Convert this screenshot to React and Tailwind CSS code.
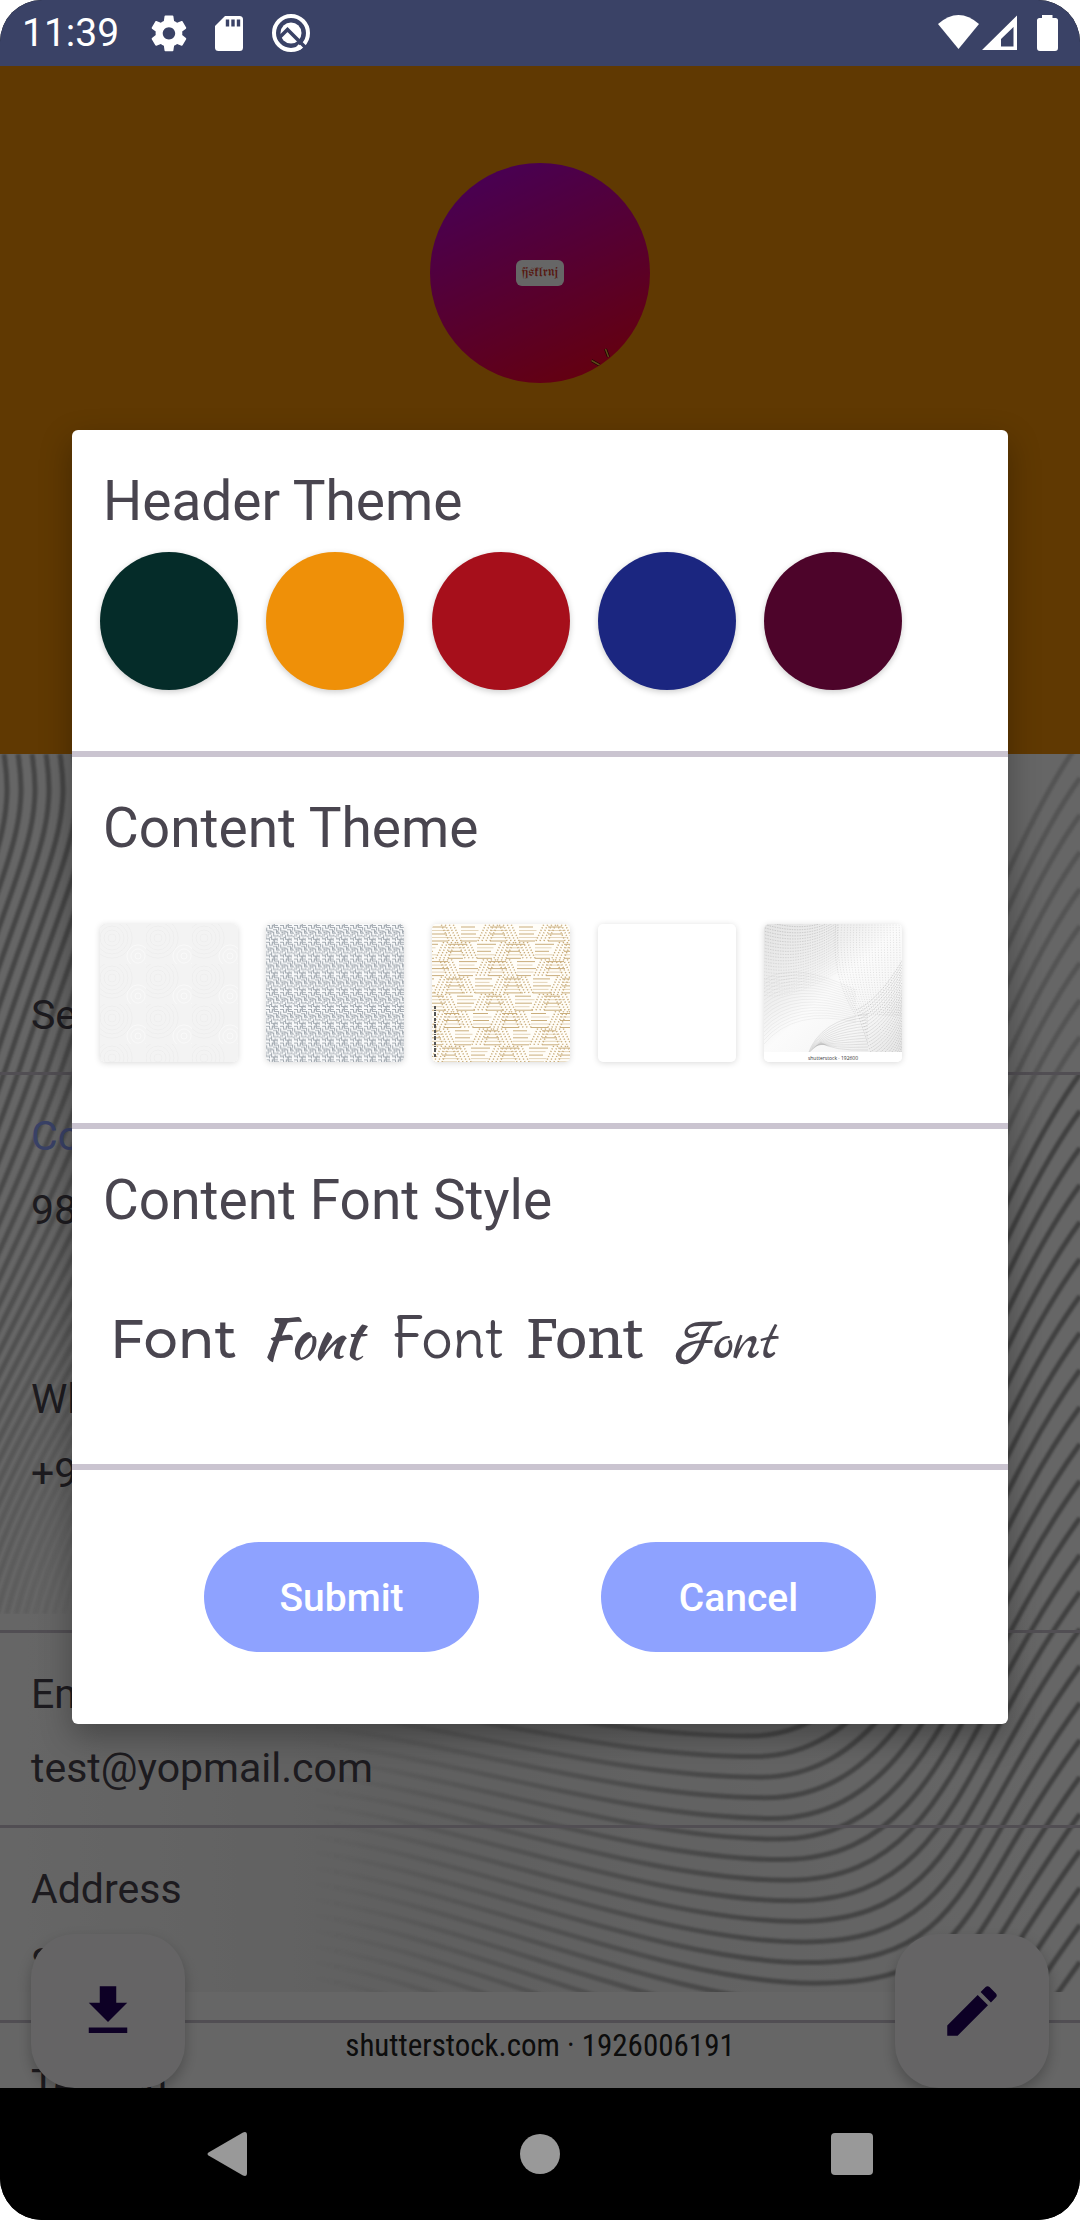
import React from "react";

const range = (from, to) => Array.from({ length: to - from + 1 }, (_, i) => from + i);

/* ---------- status bar ---------- */

function StatusBar() {
  return (
    <header className="flex h-[66px] shrink-0 items-center justify-between bg-[#3a4266] px-[22px] text-white">
      <div className="flex items-center gap-7">
        <time className="mr-1 text-[39px] leading-[48px]">11:39</time>
        <svg className="h-10 w-9" viewBox="0 0 36 40" fill="#fff" aria-label="Settings">
          <g transform="translate(-3.4 -1) scale(1.78)">
            <path d="M19.43 12.98c.04-.32.07-.64.07-.98s-.03-.66-.07-.98l2.11-1.65c.19-.15.24-.42.12-.64l-2-3.46c-.12-.22-.39-.3-.61-.22l-2.49 1c-.52-.4-1.08-.73-1.69-.98l-.38-2.65C14.46 2.18 14.25 2 14 2h-4c-.25 0-.46.18-.49.42l-.38 2.65c-.61.25-1.17.59-1.69.98l-2.49-1c-.23-.09-.49 0-.61.22l-2 3.46c-.13.22-.07.49.12.64l2.11 1.65c-.04.32-.07.65-.07.98s.03.66.07.98l-2.11 1.65c-.19.15-.24.42-.12.64l2 3.46c.12.22.39.3.61.22l2.49-1c.52.4 1.08.73 1.69.98l.38 2.65c.03.24.24.42.49.42h4c.25 0 .46-.18.49-.42l.38-2.65c.61-.25 1.17-.59 1.69-.98l2.49 1c.23.09.49 0 .61-.22l2-3.46c.12-.22.07-.49-.12-.64l-2.11-1.65zM12 15.5c-1.93 0-3.5-1.57-3.5-3.5s1.57-3.5 3.5-3.5 3.5 1.57 3.5 3.5-1.57 3.5-3.5 3.5z" />
          </g>
        </svg>
        <svg className="h-10 w-[28px]" viewBox="0 0 28 40" aria-label="SD card">
          <path fill="#fff" d="M10 3h14.500q3.500 0 3.500 3.500v28q0 3.500-3.500 3.500h-21q-3.500 0-3.500-3.500V13z" />
          <path stroke="#3a4266" strokeWidth="3.400" d="M12.500 6.500v7M18 6.500v7M23.500 6.500v7" />
        </svg>
        <svg className="h-10 w-10" viewBox="0 0 40 40" fill="none" aria-label="Device assistant">
          <circle cx="20" cy="20" r="17" stroke="#fff" strokeWidth="4" />
          <circle cx="20" cy="20" r="10.500" fill="#fff" />
          <path stroke="#3a4266" strokeWidth="3.600" d="M8 25l8.500-8.500L34 34" />
          <path stroke="#fff" strokeWidth="3.600" d="M26.500 32.500l3.500 3.500" />
        </svg>
      </div>
      <svg className="h-10 w-[121px]" viewBox="937 13 121 40" fill="#fff" aria-label="Wi-Fi, signal and battery">
        <path d="M958.500 49L938 24q20.500-18 41 0z" />
        <path fillRule="evenodd" d="M1017 15.500V50H982zM1013.500 27l-12.500 12v7.500h12.500z" />
        <path d="M1042 18v-3h10.500v3h3q2.500 0 2.500 2.500V48q0 3-3 3h-15q-3 0-3-3V20.500q0-2.500 2.500-2.500z" />
      </svg>
    </header>
  );
}

/* ---------- profile page ---------- */

function ProfilePicture() {
  return (
    <div className="relative mx-auto flex size-[220px] items-center justify-center overflow-hidden rounded-full bg-[linear-gradient(155deg,#b400d0_10%,#fa0028_90%)]">
      <span className="rounded-md bg-white px-[6px] font-['UnifrakturMaguntia','Liberation_Serif',serif] text-sm leading-[26px] text-[#d8402c]">
        fjsklrnj
      </span>
      <svg className="absolute inset-0 size-full" viewBox="0 0 220 220" fill="none">
        <path stroke="#3a1000" strokeWidth="3" d="M161.500 197.500l8 4.500M175.500 186l3 8" />
        <path stroke="#f0b040" strokeWidth="1.500" d="M161.500 197.500l8 4.500M175.500 186l3 8" />
      </svg>
    </div>
  );
}

const valleyLines = range(-15, 34).map((k) => {
  const x = 750 + 5.4 * k;
  const y = 1736 + 20.6 * k;
  const right = 1740 - 37 * (12 - k);
  return {
    light: right < 1060,
    d: `M270 ${y - 60 - 5 * k}C430 ${y - 50 - 5 * k} ${x - 160} ${y} ${x} ${y}S960 ${right + 165} 1080 ${right}`,
  };
});

const leftLines = range(-3, 36).map((j) => ({
  d: `M${4 + 14 * j} 754C${16 + 14 * j} 830 ${-8 + 14 * j} 860 ${-72 + 14 * j} 1050C${-136 + 14 * j} 1240 ${-200 + 9.5 * j} 1420 ${-250 + 9.5 * j} 1614`,
  o: Math.max(0.03, 0.4 - Math.max(0, j - 6) * 0.0135),
}));

function WaveBackdrop() {
  return (
    <div className="absolute inset-0 bg-white" aria-hidden="true">
      <svg className="size-full" viewBox="0 754 1080 1334" preserveAspectRatio="none" fill="none">
        <defs>
          <linearGradient id="fade" gradientUnits="userSpaceOnUse" x1="270" x2="1080" y1="0" y2="0">
            <stop offset="0.050" stopColor="#555" stopOpacity="0" />
            <stop offset="0.300" stopColor="#555" stopOpacity="0.220" />
            <stop offset="0.600" stopColor="#4a4a4a" stopOpacity="0.420" />
            <stop offset="1" stopColor="#444" stopOpacity="0.500" />
          </linearGradient>
          <linearGradient id="tone" x1="0" x2="1" y1="0" y2="0">
            <stop offset="0" stopColor="#999" stopOpacity="0" />
            <stop offset="0.400" stopColor="#999" stopOpacity="0.160" />
            <stop offset="1" stopColor="#999" stopOpacity="0" />
          </linearGradient>
          <filter id="soft">
            <feGaussianBlur stdDeviation="1.200" />
          </filter>
          <clipPath id="art">
            <rect x="0" y="754" width="1080" height="1238" />
          </clipPath>
          <clipPath id="leftSide">
            <rect x="0" y="754" width="160" height="860" />
          </clipPath>
        </defs>
        <rect x="0" y="1600" width="1080" height="392" fill="url(#tone)" />
        <g clipPath="url(#art)">
          <g stroke="url(#fade)" strokeWidth="5" filter="url(#soft)">
            {valleyLines.map((l) => (
              <path key={l.d} d={l.d} opacity={l.light ? 0.5 : 1} />
            ))}
          </g>
        </g>
        <g clipPath="url(#leftSide)">
          <g stroke="#333" strokeWidth="5" filter="url(#soft)">
            {leftLines.map((l) => (
              <path key={l.d} d={l.d} opacity={l.o} />
            ))}
          </g>
        </g>
      </svg>
      <p className="absolute inset-x-0 bottom-5 text-center font-['Roboto_Condensed','Liberation_Sans_Narrow','Open_Sans',sans-serif] text-[31px] leading-[44px] text-[#222]">
        shutterstock.com · 1926006191
      </p>
    </div>
  );
}

function Row({ children, className }) {
  return (
    <section className={"relative flex flex-col gap-[26px] border-b-[3px] border-[#cac4d0] px-[31px] pb-[33px] " + className}>
      {children}
    </section>
  );
}

function Fab({ label, d, className }) {
  return (
    <button
      type="button"
      aria-label={label}
      className={"absolute bottom-0 flex size-[154px] items-center justify-center rounded-[44px] bg-[#fcfbfd] shadow-[0_6px_14px_rgba(0,0,0,0.25)] " + className}
    >
      <svg className="size-[66px]" viewBox="0 0 24 24" fill="#21005d">
        <path d={d} />
      </svg>
    </button>
  );
}

function ProfilePage() {
  return (
    <div className="flex h-full flex-col">
      <div className="h-[688px] shrink-0 bg-[#f09005] pt-[97px]">
        <ProfilePicture />
      </div>
      <div className="relative min-h-0 flex-1 overflow-hidden">
        <WaveBackdrop />
        <div className="text-[41px] leading-[48px] text-[#49454f]">
          <Row className="pt-[237px]">
            <h2>Services</h2>
          </Row>
          <Row className="pt-[37px]">
            <h2 className="text-[#8ea2ff]">Contact</h2>
            <p>9876543210</p>
            <div className="flex flex-col gap-[26px] pt-[115px] pb-[100px]">
              <h2>WhatsApp</h2>
              <p>+919876543210</p>
            </div>
          </Row>
          <Row className="pt-[37px]">
            <h2>Email</h2>
            <p>test@yopmail.com</p>
          </Row>
          <Row className="pt-[37px]">
            <h2>Address</h2>
            <p>Surat</p>
          </Row>
          <Row className="pt-[37px]">
            <h2>Telefon</h2>
          </Row>
        </div>
      </div>
      <Fab label="Download" className="left-[31px]" d="M19 9h-4V3H9v6H5l7 7 7-7zM5 18v2h14v-2H5z" />
      <Fab
        label="Edit"
        className="right-[31px]"
        d="M3 17.250V21h3.750L17.810 9.940l-3.750-3.750L3 17.250zM20.710 7.040c.39-.39.39-1.020 0-1.410l-2.340-2.340c-.39-.39-1.020-.39-1.410 0l-1.830 1.830 3.750 3.750 1.830-1.830z"
      />
    </div>
  );
}

/* ---------- theme dialog ---------- */

const HEADER_COLORS = [
  { name: "Dark green", cls: "bg-[#052c29]" },
  { name: "Orange", cls: "bg-[#ef9008]" },
  { name: "Red", cls: "bg-[#a60f1b]" },
  { name: "Blue", cls: "bg-[#1b2680]" },
  { name: "Maroon", cls: "bg-[#4d042a]" },
];

function EmbossedArt() {
  return (
    <>
      <defs>
        <pattern id="emboss" width="46" height="40" patternUnits="userSpaceOnUse">
          <g fill="none" stroke="#eeeeee">
            {[4, 8, 12, 16, 20].map((r) => (
              <circle key={r} cx="12" cy="14" r={r} />
            ))}
            {[3, 7, 11].map((r) => (
              <circle key={r} cx="38" cy="32" r={r} stroke="#f9f9f9" />
            ))}
          </g>
        </pattern>
      </defs>
      <rect width="138" height="138" fill="#f3f3f3" />
      <rect width="138" height="138" fill="url(#emboss)" />
    </>
  );
}

function MazeArt() {
  return (
    <>
      <defs>
        <pattern id="maze" width="20" height="24" patternUnits="userSpaceOnUse" patternTransform="scale(0.7)">
          <path
            fill="none"
            stroke="#a4abb2"
            strokeWidth="1.500"
            d="M0 2h5v4h4V1M12 0v5h6v4M1 5v5h6v4H3v4M10 8h5v5h5M11 11v6h6v-2M0 14v7h5v3M8 16v6h5v-3M16 20v4M18 18h2M8 10l3 3M13 2h4M2 12h3M5 19h3M9 4l2-3M15 9l3 3M10 24l6-3"
          />
        </pattern>
      </defs>
      <rect width="138" height="138" fill="#f8f9fa" />
      <rect width="138" height="138" fill="url(#maze)" />
    </>
  );
}

const hatchCells = range(0, 5).flatMap((c) => range(0, 7).map((r) => ({ c, r })));

function HatchArt() {
  return (
    <>
      <rect width="138" height="138" fill="#fffdf8" />
      <g fill="none" stroke="#c9ad7c">
        {hatchCells.map(({ c, r }) => {
          const x = c * 29 - ((r * 13) % 24);
          const y = r * 17.3;
          const slant = (c + r) % 2 ? 8 : -8;
          return (
            <g key={c + "-" + r}>
              {[0, 3.5, 7, 10.5, 14].map((o) => (
                <path key={o} d={`M${x} ${y + o + 3}h${14 + ((r * 5 + o) % 6)}`} opacity={o % 7 ? 0.5 : 1} />
              ))}
              {[0, 4, 8, 12].map((o) => (
                <path key={o} strokeDasharray="1.200 1.600" strokeWidth="1.500" d={`M${x + 17 + o} ${y + 17}l${slant} -17`} />
              ))}
            </g>
          );
        })}
      </g>
      <path stroke="#555" strokeWidth="2" strokeDasharray="3 1 1 1 4 2" d="M3 82v52" />
    </>
  );
}

function WaveArt() {
  return (
    <>
      <defs>
        <clipPath id="waveClip">
          <rect width="138" height="128" />
        </clipPath>
        <linearGradient id="waveTone" x1="0" y1="0" x2="1" y2="1">
          <stop offset="0" stopColor="#e4e4e4" />
          <stop offset="0.350" stopColor="#f0f0f0" />
          <stop offset="0.500" stopColor="#fbfbfb" />
          <stop offset="0.750" stopColor="#f6f6f6" />
          <stop offset="1" stopColor="#e6e6e6" />
        </linearGradient>
      </defs>
      <rect width="138" height="138" fill="#fff" />
      <g clipPath="url(#waveClip)" fill="none" stroke="#808080" strokeWidth="0.600">
        <rect width="138" height="128" fill="url(#waveTone)" stroke="none" />
        {range(0, 26).map((i) => (
          <path key={"a" + i} strokeDasharray="1.500 1" opacity={0.6 - i * 0.018} d={`M74 ${-20 + i * 2.6}Q${50 - i} ${i * 3} -4 ${-18 + i * 3.4}`} />
        ))}
        {range(0, 26).map((i) => (
          <path key={"b" + i} strokeDasharray="1 1.500" opacity="0.350" d={`M${72 + i * 3} -2Q${66 + i * 3.4} 50 ${92 + i * 2} 92`} />
        ))}
        {range(0, 30).map((i) => (
          <path key={"c" + i} strokeDasharray="1.500 1" opacity="0.500" d={`M${92 + i} ${86 + i * 3}Q${116 + i} ${76 + i * 2.8} 142 ${30 + i * 3.4}`} />
        ))}
        {range(0, 12).map((i) => (
          <path key={"d" + i} opacity="0.300" d={`M${44 + i} ${130 - i}Q${56 + i} ${96 + i * 2.6} 104 ${90 + i * 3}`} />
        ))}
        {range(0, 16).map((i) => (
          <path key={"e" + i} opacity="0.150" d={`M0 ${56 + i * 4}Q30 ${36 + i * 3} 92 ${66 + i * 2}`} />
        ))}
      </g>
      <text x="69" y="136" textAnchor="middle" fill="#333" fontFamily="Open Sans, sans-serif" fontSize="5">
        shutterstock · 192600
      </text>
    </>
  );
}

const CONTENT_THEMES = [
  { name: "Embossed pattern", Art: EmbossedArt },
  { name: "Maze pattern", Art: MazeArt },
  { name: "Hatched pattern", Art: HatchArt },
  { name: "Plain white", Art: null },
  { name: "Wave lines", Art: WaveArt },
];

const FONT_STYLES = [
  { name: "Sans", cls: "w-[151px] font-['Montserrat','Inter',sans-serif] text-[54px] font-medium" },
  { name: "Brush", cls: "w-[131px] font-['Kaushan_Script','Liberation_Serif',serif] text-[54px]" },
  { name: "Casual", cls: "w-[134px] font-['Delius','Open_Sans',sans-serif] text-[56px]" },
  { name: "Slab", cls: "w-[148px] font-['Bitter','DejaVu_Serif_Condensed','DejaVu_Serif',serif] text-[56px] font-medium" },
  { name: "Script", cls: "w-[110px] font-['Marck_Script','Dancing_Script','Liberation_Serif',serif] text-[58px] font-semibold" },
];

function Section({ title, className, children }) {
  return (
    <section className={"border-b-[6px] border-[#cac4d0] " + className}>
      <h2 className="px-[31px] text-[55px] leading-[64px]">{title}</h2>
      {children}
    </section>
  );
}

function ThemeDialog() {
  return (
    <div
      role="dialog"
      aria-modal="true"
      aria-label="Theme settings"
      className="w-full rounded-md bg-white text-[#49454f] shadow-[0_12px_32px_rgba(0,0,0,0.3)]"
    >
      <Section title="Header Theme" className="pt-[39px] pb-[61px]">
        <div className="flex gap-7 px-7 pt-[19px]">
          {HEADER_COLORS.map((c) => (
            <button key={c.name} type="button" aria-label={c.name} className={"size-[138px] rounded-full shadow-[0_2px_6px_rgba(0,0,0,0.2)] " + c.cls} />
          ))}
        </div>
      </Section>
      <Section title="Content Theme" className="pt-[39px] pb-[61px]">
        <div className="flex gap-7 px-7 pt-16">
          {CONTENT_THEMES.map(({ name, Art }) => (
            <button key={name} type="button" aria-label={name} className="size-[138px] overflow-hidden rounded-[5px] bg-white shadow-[0_1px_6px_rgba(0,0,0,0.15)]">
              <svg className="size-full" viewBox="0 0 138 138">{Art && <Art />}</svg>
            </button>
          ))}
        </div>
      </Section>
      <Section title="Content Font Style" className="pt-[39px]">
        <div className="flex h-[232px] items-baseline px-[38px] pt-[70px]">
          {FONT_STYLES.map((f) => (
            <button key={f.name} type="button" aria-label={f.name + " font"} className={"text-left leading-[72px] " + f.cls}>
              Font
            </button>
          ))}
        </div>
      </Section>
      <div className="flex justify-center gap-[122px] pt-[72px] pb-[72px]">
        {["Submit", "Cancel"].map((label) => (
          <button key={label} type="button" className="h-[110px] w-[275px] rounded-full bg-[#8ea2ff] pt-[2px] text-[39px] font-medium text-white">
            {label}
          </button>
        ))}
      </div>
    </div>
  );
}

/* ---------- navigation bar ---------- */

function NavBar() {
  return (
    <nav className="grid h-[132px] shrink-0 grid-cols-[1fr_92px_1fr] items-center bg-black px-[207px]">
      <button type="button" aria-label="Back" className="justify-self-start">
        <svg className="h-11 w-10" viewBox="0 0 40 44" fill="#999">
          <path d="M1.500 20.500L36 .5q4-1.500 4 2.500v38q0 4-4 2.500L1.500 23.500q-2-1.500 0-3z" />
        </svg>
      </button>
      <button type="button" aria-label="Home" className="size-10 justify-self-center rounded-full bg-[#999]" />
      <button type="button" aria-label="Recent apps" className="size-[42px] justify-self-end rounded bg-[#999]" />
    </nav>
  );
}

export default function App() {
  return (
    <div className="bg-white">
      <div className="flex h-screen flex-col overflow-hidden rounded-[42px] bg-black font-['Roboto',sans-serif]">
        <StatusBar />
        <main className="relative min-h-0 flex-1 overflow-hidden">
          <ProfilePage />
          <div className="absolute inset-0 flex items-center bg-black/60 px-[72px]">
            <ThemeDialog />
          </div>
        </main>
        <NavBar />
      </div>
    </div>
  );
}
